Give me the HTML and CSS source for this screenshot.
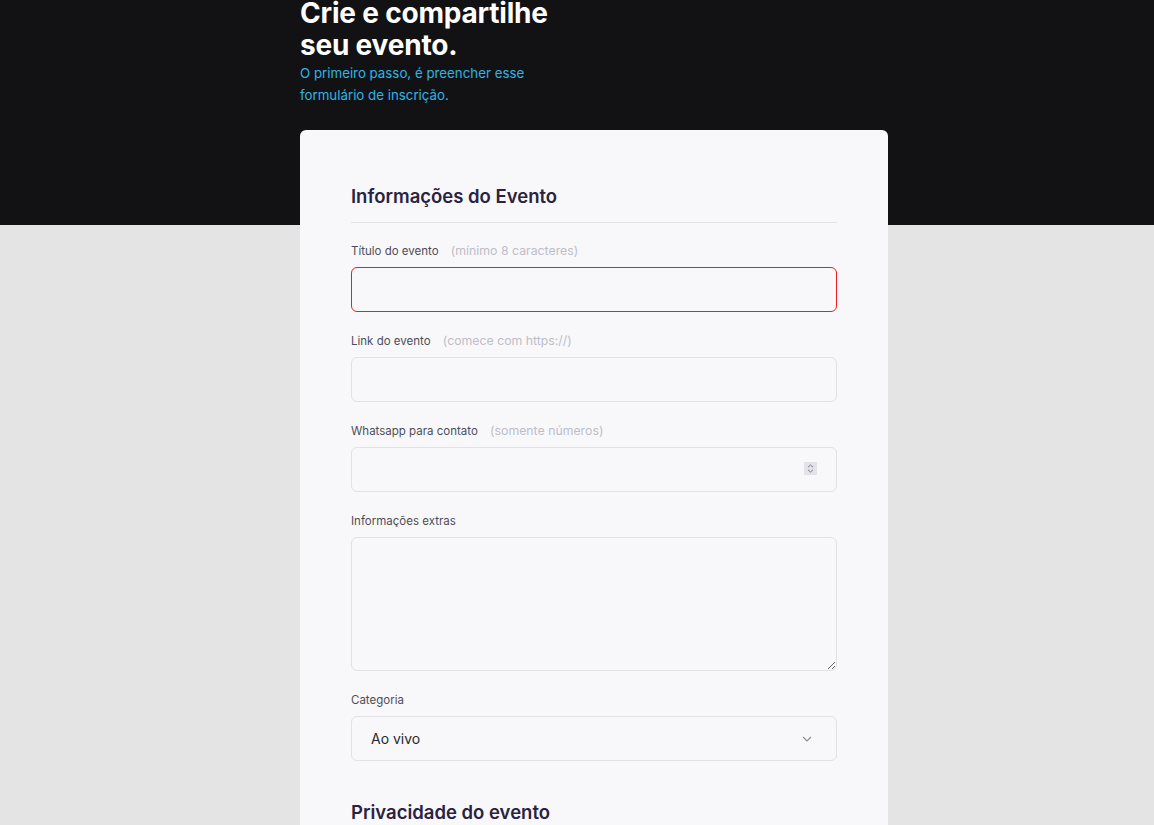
FILE: index.html
```html
<!DOCTYPE html>
<html lang="pt-BR">
<head>
<meta charset="utf-8">
<title>Crie e compartilhe seu evento</title>
<link rel="stylesheet" href="styles.css">
</head>
<body>
<header class="hero">
  <div class="hero-inner">
    <h1 class="hero-title">Crie e compartilhe<br>seu evento.</h1>
    <p class="hero-sub">O primeiro passo, é preencher esse<br>formulário de inscrição.</p>
  </div>
</header>
<main class="page">
  <form class="card">
    <h2 class="section-title">Informações do Evento</h2>
    <div class="fields">
      <div class="field">
        <label class="label">Título do evento <span class="hint">(mínimo 8 caracteres)</span></label>
        <input class="input input-error" type="text">
      </div>
      <div class="field">
        <label class="label">Link do evento <span class="hint">(comece com https://)</span></label>
        <input class="input" type="text">
      </div>
      <div class="field">
        <label class="label">Whatsapp para contato <span class="hint">(somente números)</span></label>
        <div class="input-wrap">
          <input class="input" type="text" inputmode="numeric">
          <span class="spinner"><svg width="13" height="13" viewBox="0 0 13 13"><rect width="13" height="13" fill="#e2e2e8"/><path d="M4 5.2 6.5 3 9 5.2M4 7.8 6.5 10 9 7.8" fill="none" stroke="#7c7c8a" stroke-width="1"/></svg></span>
        </div>
      </div>
      <div class="field">
        <label class="label">Informações extras</label>
        <textarea class="input textarea"></textarea>
      </div>
      <div class="field">
        <label class="label">Categoria</label>
        <div class="input-wrap">
          <select class="input select"><option>Ao vivo</option><option>Online</option></select>
          <span class="chevron"><svg width="10" height="6" viewBox="0 0 10 6"><path d="M1 1l4 4 4-4" fill="none" stroke="#8d8d99" stroke-width="1.2"/></svg></span>
        </div>
      </div>
    </div>
    <h2 class="section-title second">Privacidade do evento</h2>
  </form>
</main>
</body>
</html>
```
FILE: styles.css
```css
* { box-sizing: border-box; }
html, body { margin: 0; padding: 0; }
body {
  background: #e4e4e4;
  font-family: "Inter", "Liberation Sans", sans-serif;
  color: #29292e;
}
.hero {
  background: #121214;
  height: 225px;
  display: flow-root;
}
.hero-inner {
  width: 588px;
  margin-left: calc(50% - 277px);
}
.hero-title {
  margin: -3px 0 0;
  color: #ffffff;
  font-size: 28px;
  line-height: 32px;
  font-weight: 700;
  letter-spacing: -0.2px;
}
.hero-sub {
  margin: 1px 0 0;
  color: #2fb4e6;
  font-size: 13.3px;
  line-height: 22px;
  font-weight: 400;
}
.page {
  margin-top: -95px;
  padding-left: calc(50% - 277px);
}
.card {
  width: 588px;
  background: #f8f8fb;
  border-radius: 6px;
  padding: 53px 51px 40px;
}
.section-title {
  margin: 0;
  font-size: 18.5px;
  line-height: 26px;
  font-weight: 600;
  color: #2a2240;
  padding-bottom: 13px;
  border-bottom: 1px solid #e1e1e6;
}
.section-title.second {
  border-bottom: none;
  margin-top: 38px;
}
.fields {
  display: flex;
  flex-direction: column;
  gap: 20px;
  padding-top: 19px;
}
.field {
  display: flex;
  flex-direction: column;
  gap: 7px;
}
.label {
  font-size: 11.5px;
  line-height: 18px;
  color: #4d4d57;
}
.hint {
  color: #bdbdc7;
  font-size: 12.3px;
  margin-left: 9px;
}
.input {
  display: block;
  width: 100%;
  height: 45px;
  border: 1px solid #e1e1e6;
  border-radius: 6px;
  background: #f8f8fb;
  font-family: inherit;
  font-size: 14px;
  color: #29292e;
  padding: 0 19px;
  outline: none;
}
.input-error { border-color: #ee1c1c; }
.textarea {
  height: 134px;
  resize: vertical;
  padding: 12px 19px;
}
.input-wrap { position: relative; }
.spinner {
  position: absolute;
  right: 20px;
  top: 15px;
  line-height: 0;
}
.select {
  appearance: none;
  -webkit-appearance: none;
  padding-left: 19px;
}
.chevron {
  position: absolute;
  right: 25px;
  top: 20px;
  line-height: 0;
  pointer-events: none;
}
```
